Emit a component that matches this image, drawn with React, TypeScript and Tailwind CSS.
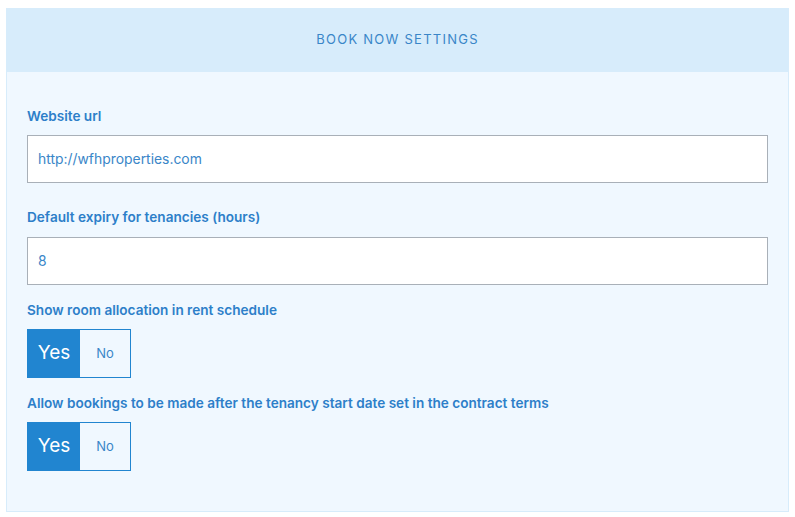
import React from "react";

function Toggle() {
  return (
    <div className="flex h-[49px] w-[104px] border border-[#2185d0]">
      <div className="flex w-[52px] items-center justify-center bg-[#2185d0] text-[19px] text-white">Yes</div>
      <div className="flex flex-1 items-center justify-center text-[13px] text-[#3a86c8]">No</div>
    </div>
  );
}

export default function App() {
  return (
    <div className="min-h-[517px] bg-white px-[6px] pt-[8px] pb-[5px]" style={{ fontFamily: "Inter, 'Liberation Sans', sans-serif" }}>
      <div className="w-[783px] border border-t-0 border-[#d7ecfb] bg-[#f0f8ff]">
        <div className="-mx-px flex h-[64px] items-center justify-center bg-[#d7ecfb] text-[13px] tracking-[1.25px] text-[#3a86c8]">
          BOOK NOW SETTINGS
        </div>
        <div className="px-[20px] pt-[36px] pb-[40px]">
          <div className="text-[13.6px] font-semibold leading-[16px] text-[#2d7fc9]">Website url</div>
          <div className="mt-[11px] flex h-[48px] items-center border border-[#a9b0b8] bg-white px-[10px] text-[13.9px] text-[#3a86c8]">
            http://wfhproperties.com
          </div>
          <div className="mt-[26px] text-[13.6px] font-semibold leading-[16px] text-[#2d7fc9]">Default expiry for tenancies (hours)</div>
          <div className="mt-[12px] flex h-[48px] items-center border border-[#a9b0b8] bg-white px-[10px] text-[13.9px] text-[#3a86c8]">
            8
          </div>
          <div className="mt-[17px] text-[13.6px] font-semibold leading-[16px] text-[#2d7fc9]">Show room allocation in rent schedule</div>
          <div className="mt-[11px]"><Toggle /></div>
          <div className="mt-[17px] text-[13.6px] font-semibold leading-[16px] text-[#2d7fc9]">Allow bookings to be made after the tenancy start date set in the contract terms</div>
          <div className="mt-[11px]"><Toggle /></div>
        </div>
      </div>
    </div>
  );
}
